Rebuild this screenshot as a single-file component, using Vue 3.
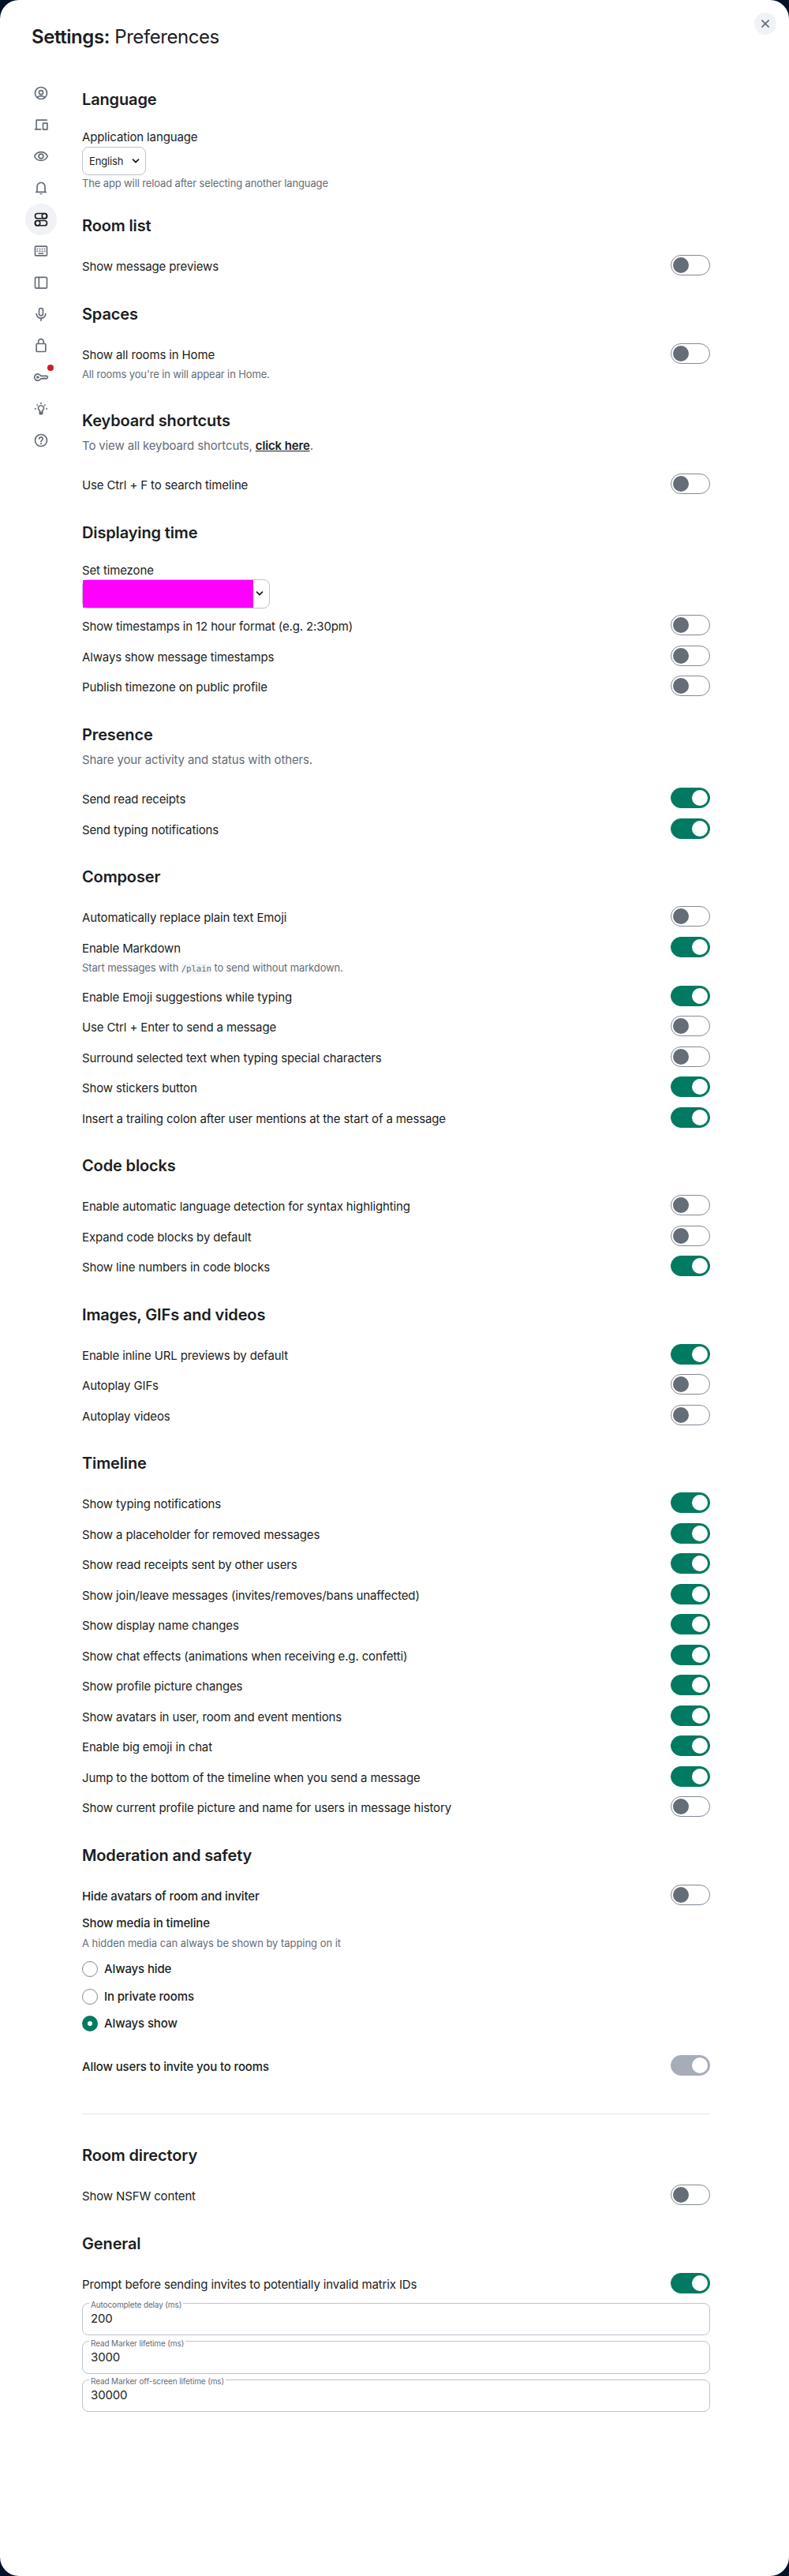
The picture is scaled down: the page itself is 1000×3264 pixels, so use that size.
<script setup>
import { ref } from 'vue'

const navItems = [
  { id: 'account', label: 'Account' },
  { id: 'sessions', label: 'Sessions' },
  { id: 'appearance', label: 'Appearance' },
  { id: 'notifications', label: 'Notifications' },
  { id: 'preferences', label: 'Preferences' },
  { id: 'keyboard', label: 'Keyboard' },
  { id: 'sidebar', label: 'Sidebar' },
  { id: 'voice', label: 'Voice & Video' },
  { id: 'security', label: 'Security & Privacy' },
  { id: 'encryption', label: 'Encryption', alert: true },
  { id: 'labs', label: 'Labs' },
  { id: 'help', label: 'Help & About' },
]

const sections = ref([
  { title: 'Language', kind: 'language', rows: [] },
  { title: 'Room list', rows: [{ label: 'Show message previews', on: false }] },
  {
    title: 'Spaces',
    rows: [{ label: 'Show all rooms in Home', on: false, hint: "All rooms you're in will appear in Home." }],
  },
  { title: 'Keyboard shortcuts', kind: 'shortcuts', rows: [{ label: 'Use Ctrl + F to search timeline', on: false }] },
  {
    title: 'Displaying time',
    kind: 'timezone',
    rows: [
      { label: 'Show timestamps in 12 hour format (e.g. 2:30pm)', on: false },
      { label: 'Always show message timestamps', on: false },
      { label: 'Publish timezone on public profile', on: false },
    ],
  },
  {
    title: 'Presence',
    kind: 'presence',
    rows: [
      { label: 'Send read receipts', on: true },
      { label: 'Send typing notifications', on: true },
    ],
  },
  {
    title: 'Composer',
    rows: [
      { label: 'Automatically replace plain text Emoji', on: false },
      { label: 'Enable Markdown', on: true, markdownHint: true },
      { label: 'Enable Emoji suggestions while typing', on: true },
      { label: 'Use Ctrl + Enter to send a message', on: false },
      { label: 'Surround selected text when typing special characters', on: false },
      { label: 'Show stickers button', on: true },
      { label: 'Insert a trailing colon after user mentions at the start of a message', on: true },
    ],
  },
  {
    title: 'Code blocks',
    rows: [
      { label: 'Enable automatic language detection for syntax highlighting', on: false },
      { label: 'Expand code blocks by default', on: false },
      { label: 'Show line numbers in code blocks', on: true },
    ],
  },
  {
    title: 'Images, GIFs and videos',
    rows: [
      { label: 'Enable inline URL previews by default', on: true },
      { label: 'Autoplay GIFs', on: false },
      { label: 'Autoplay videos', on: false },
    ],
  },
  {
    title: 'Timeline',
    rows: [
      { label: 'Show typing notifications', on: true },
      { label: 'Show a placeholder for removed messages', on: true },
      { label: 'Show read receipts sent by other users', on: true },
      { label: 'Show join/leave messages (invites/removes/bans unaffected)', on: true },
      { label: 'Show display name changes', on: true },
      { label: 'Show chat effects (animations when receiving e.g. confetti)', on: true },
      { label: 'Show profile picture changes', on: true },
      { label: 'Show avatars in user, room and event mentions', on: true },
      { label: 'Enable big emoji in chat', on: true },
      { label: 'Jump to the bottom of the timeline when you send a message', on: true },
      { label: 'Show current profile picture and name for users in message history', on: false },
    ],
  },
  {
    title: 'Moderation and safety',
    kind: 'moderation',
    rows: [{ label: 'Hide avatars of room and inviter', on: false }],
  },
  { title: 'Room directory', rows: [{ label: 'Show NSFW content', on: false }] },
  {
    title: 'General',
    kind: 'general',
    rows: [{ label: 'Prompt before sending invites to potentially invalid matrix IDs', on: true }],
  },
])

const mediaOptions = ['Always hide', 'In private rooms', 'Always show']
const media = ref('Always show')

const fields = [
  { label: 'Autocomplete delay (ms)', value: '200' },
  { label: 'Read Marker lifetime (ms)', value: '3000' },
  { label: 'Read Marker off-screen lifetime (ms)', value: '30000' },
]
</script>

<template>
  <div class="backdrop">
    <main class="dialog">
      <header class="header">
        <h1 class="title"><strong>Settings:</strong> Preferences</h1>
        <button class="close" aria-label="Close">
          <svg viewBox="0 0 24 24"><path class="line" d="M7 7l10 10M17 7L7 17" /></svg>
        </button>
      </header>

      <div class="body">
        <nav class="nav">
          <a v-for="item in navItems" :key="item.id" class="nav-item" :class="{ active: item.id === 'preferences' }" :aria-label="item.label">
            <svg viewBox="0 0 24 24">
              <g v-if="item.id === 'account'" class="line">
                <circle cx="12" cy="12" r="9" />
                <circle cx="12" cy="11" r="3" />
                <path d="M6.3 18.3c1.5-1.3 3.5-1.9 5.7-1.9s4.2.6 5.7 1.9" />
              </g>
              <g v-else-if="item.id === 'sessions'" class="line">
                <path d="M20.5 5H5v13.500M3 19h8.500" />
                <rect x="15" y="9.700" width="6.500" height="9.600" />
              </g>
              <g v-else-if="item.id === 'appearance'" class="line">
                <path d="M2 12c2-4.200 5.600-6.500 10-6.500s8 2.300 10 6.500c-2 4.200-5.600 6.500-10 6.500S4 16.200 2 12z" />
                <circle cx="12" cy="12" r="3.500" />
              </g>
              <g v-else-if="item.id === 'notifications'">
                <path class="line" d="M4.500 18.500h15M6 18V10a6 6 0 0 1 12 0v8" />
                <path d="M10 20.600h4a2 1.700 0 0 1-4 0z" />
              </g>
              <g v-else-if="item.id === 'preferences'" class="line">
                <rect x="3" y="3" width="18" height="7.500" rx="3.750" />
                <circle cx="17.250" cy="6.750" r="3.750" />
                <rect x="3" y="13.800" width="18" height="7.500" rx="3.750" />
                <circle cx="6.750" cy="17.550" r="3.750" />
              </g>
              <g v-else-if="item.id === 'keyboard'">
                <rect class="line" x="3" y="5" width="18" height="14" rx="1" />
                <path d="M5.500 8h2v2h-2zM9.200 8h2v2h-2zM12.800 8h2v2h-2zM16.500 8h2v2h-2zM5.500 11.500h2v2h-2zM9.200 11.500h2v2h-2zM12.800 11.500h2v2h-2zM16.500 11.500h2v2h-2zM8 15h8v1.800H8z" />
              </g>
              <g v-else-if="item.id === 'sidebar'" class="line">
                <rect x="3" y="4" width="18" height="16.500" rx="2" />
                <path d="M8.800 4v16.500" />
              </g>
              <g v-else-if="item.id === 'voice'" class="line">
                <rect x="9" y="3" width="6" height="11.500" rx="3" />
                <path d="M5 11.500a7 6.700 0 0 0 14 0M12 18.500v3.300" />
              </g>
              <g v-else-if="item.id === 'security'" class="line">
                <rect x="5" y="9" width="14" height="12" rx="1" />
                <path d="M8 9V6a4 4 0 0 1 8 0v3" />
              </g>
              <g v-else-if="item.id === 'encryption'">
                <path class="line" d="M11.600 10H20.800L22.300 12L20.500 14.200H18.800L17.500 13.200L16 14.500L14.500 13.500L13 14.300H11.500A5 5 0 1 1 11.600 10z" />
                <circle cx="7" cy="12" r="2.200" />
              </g>
              <g v-else-if="item.id === 'labs'">
                <path class="line" d="M10 17.200v-2.400a4.200 4.200 0 1 1 4 0v2.400z" />
                <path d="M9 17h6v2.600a1.500 1.500 0 0 1-1.500 1.500h-3A1.500 1.500 0 0 1 9 19.600z" />
                <path d="M11 2.500h2v2.300h-2zM2.200 11h2.500v2H2.200zM19.300 11h2.500v2h-2.500zM4.700 6.100l1.300-1.300 1.700 1.700-1.300 1.300zM18 4.800l1.300 1.300-1.700 1.700-1.300-1.300z" />
              </g>
              <g v-else>
                <circle class="line" cx="12" cy="12" r="9" />
                <path class="line" d="M9.200 9.600c.1-1.600 1.200-2.500 2.800-2.500s2.700 1 2.700 2.400c0 2.300-2.700 2.300-2.700 4.700" />
                <circle cx="12" cy="17" r="1.250" />
              </g>
            </svg>
            <span v-if="item.alert" class="alert"></span>
          </a>
        </nav>

        <div class="content">
          <section v-for="s in sections" :key="s.title" class="section" :class="s.kind">
            <h2>{{ s.title }}</h2>

            <template v-if="s.kind === 'language'">
              <div class="label">Application language</div>
              <div class="select small">
                <span>English</span>
                <svg viewBox="0 0 10 10"><path d="M1.500 3.200L5 6.700L8.500 3.200" /></svg>
              </div>
              <p class="hint">The app will reload after selecting another language</p>
            </template>
            <p v-else-if="s.kind === 'shortcuts'" class="intro">To view all keyboard shortcuts, <a>click here</a>.</p>
            <p v-else-if="s.kind === 'presence'" class="intro">Share your activity and status with others.</p>
            <template v-else-if="s.kind === 'timezone'">
              <div class="label">Set timezone</div>
              <div class="select zone">
                <span class="redacted"></span>
                <svg viewBox="0 0 10 10"><path d="M1.500 3.200L5 6.700L8.500 3.200" /></svg>
              </div>
            </template>

            <div v-for="r in s.rows" :key="r.label" class="setting">
              <div class="row">
                <span class="label">{{ r.label }}</span>
                <button class="toggle" :class="{ on: r.on }" role="switch" :aria-checked="r.on" @click="r.on = !r.on"><i></i></button>
              </div>
              <p v-if="r.hint" class="hint">{{ r.hint }}</p>
              <p v-if="r.markdownHint" class="hint">Start messages with <code>/plain</code> to send without markdown.</p>
            </div>

            <template v-if="s.kind === 'moderation'">
              <div class="label media-label">Show media in timeline</div>
              <p class="hint media-hint">A hidden media can always be shown by tapping on it</p>
              <div class="radios">
                <label v-for="o in mediaOptions" :key="o" class="radio" @click="media = o">
                  <span class="dot" :class="{ checked: media === o }"></span>
                  <span class="label">{{ o }}</span>
                </label>
              </div>
              <div class="row">
                <span class="label">Allow users to invite you to rooms</span>
                <button class="toggle on disabled" role="switch" disabled><i></i></button>
              </div>
              <hr />
            </template>

            <div v-if="s.kind === 'general'" class="fields">
              <fieldset v-for="f in fields" :key="f.label" class="field">
                <legend>{{ f.label }}</legend>
                <div class="value">{{ f.value }}</div>
              </fieldset>
            </div>
          </section>
        </div>
      </div>
    </main>
  </div>
</template>

<style>
body {
  margin: 0;
}
</style>

<style scoped>
* {
  box-sizing: border-box;
}
.backdrop {
  background: #03112a;
  font-family: Inter, sans-serif;
  font-size: 15px;
  line-height: 22.5px;
  letter-spacing: -0.135px;
  color: #1b1d22;
}
.dialog {
  width: 1000px;
  height: 3264px;
  background: #fff;
  border-radius: 24px;
}
.header {
  display: flex;
  justify-content: space-between;
  align-items: flex-start;
  height: 98px;
  padding: 16px 16px 0 40px;
}
.title {
  margin: 14px 0 0;
  font-size: 24px;
  line-height: 33px;
  font-weight: 400;
  letter-spacing: -0.018em;
}
.title strong {
  font-weight: 600;
}
button {
  border: 0;
  padding: 0;
  font: inherit;
}
.close {
  width: 28px;
  height: 28px;
  border-radius: 50%;
  background: #f0f2f5;
  color: #656d77;
  display: flex;
  align-items: center;
  justify-content: center;
}
.close svg,
.nav-item svg {
  width: 20px;
  height: 20px;
  fill: currentColor;
  display: block;
}
.line {
  fill: none;
  stroke: currentColor;
  stroke-width: 2;
  stroke-linecap: round;
  stroke-linejoin: round;
}
.body {
  display: flex;
}
.nav {
  width: 104px;
  padding-left: 32px;
  flex: none;
}
.nav-item {
  position: relative;
  display: flex;
  width: 40px;
  height: 40px;
  align-items: center;
  justify-content: center;
  border-radius: 50%;
  color: #656d77;
}
.nav-item.active {
  background: #f0f2f5;
  color: #1b1d22;
}
.alert {
  position: absolute;
  top: 4px;
  right: 4px;
  width: 8px;
  height: 8px;
  border-radius: 50%;
  background: #d51928;
}
.content {
  width: 796px;
  padding-top: 16px;
}
.section {
  padding-bottom: 24px;
}
h2 {
  margin: 0 0 25px;
  font-size: 20px;
  line-height: 24px;
  font-weight: 600;
}
.label {
  line-height: 22.5px;
}
.setting {
  margin-bottom: 12.5px;
}
.row {
  display: flex;
  height: 26px;
  align-items: flex-end;
  justify-content: space-between;
}
.row .label {
  margin-bottom: -0.75px;
}
.toggle {
  width: 50px;
  height: 26px;
  border: 1px solid #818a95;
  border-radius: 13px;
  background: #fff;
  padding: 2px;
  display: flex;
}
.toggle i {
  width: 20px;
  height: 20px;
  border-radius: 50%;
  background: #656d77;
}
.toggle.on {
  background: #007a61;
  border-color: #007a61;
  justify-content: flex-end;
}
.toggle.on i {
  background: #fff;
}
.toggle.on.disabled {
  background: #a6acb8;
  border-color: #a6acb8;
}
.hint {
  margin: 4px 0 0;
  font-size: 13px;
  line-height: 19.5px;
  color: #656d77;
}
.hint code {
  font-family: 'DejaVu Sans Mono', monospace;
  font-size: 10.8px;
  line-height: 1;
  background: #f4f5f6;
}
.intro {
  margin: -15.75px 0 23.75px;
  line-height: 22.5px;
  color: #656d77;
}
.intro a {
  color: #1b1d22;
  font-weight: 600;
  text-decoration: underline;
}
.select {
  display: flex;
  align-items: center;
  height: 36.5px;
  border: 1px solid #bcc3cd;
  border-radius: 8px;
  font-size: 13px;
}
.select svg {
  width: 10px;
  height: 10px;
  fill: none;
  stroke: #1b1d22;
  stroke-width: 1.8;
  stroke-linecap: round;
  stroke-linejoin: round;
}
.select.small {
  width: 81px;
  padding: 0 7px 0 8px;
  justify-content: space-between;
}
.language .hint {
  margin: 1px 0 7.5px;
}
.zone {
  width: 238px;
  margin-bottom: 8.5px;
}
.redacted {
  width: 216px;
  height: 35px;
  background: #f0f;
  margin-right: 3px;
}
.moderation .label {
  font-weight: 500;
}
.media-label {
  margin-top: -0.5px;
}
.media-hint {
  margin: 5px 0 11px;
  letter-spacing: -0.04px;
}
.radios {
  display: flex;
  flex-direction: column;
  gap: 12px;
  margin-bottom: 29px;
}
.radio {
  display: flex;
  height: 22.5px;
  align-items: center;
  gap: 8px;
}
.radio .label {
  margin-bottom: -1.5px;
}
.dot {
  width: 20px;
  height: 20px;
  margin-top: 0.6px;
  border: 1px solid #818a95;
  border-radius: 50%;
}
.dot.checked {
  border: 7px solid #007a61;
}
hr {
  border: 0;
  height: 1px;
  background: #e1e6ec;
  margin: 48px 0 16px;
}
.fields {
  display: flex;
  flex-direction: column;
  gap: 1.5px;
  margin-top: -6px;
}
.field {
  margin: 0;
  padding: 3px 10px 0;
  min-width: 0;
  height: 47px;
  border: 1px solid #bcc3cd;
  border-radius: 8px;
}
.field legend {
  padding: 0 2px;
  margin-left: -2px;
  font-size: 10px;
  line-height: 12px;
  color: #656d77;
  transform: translateY(2px);
}
</style>
